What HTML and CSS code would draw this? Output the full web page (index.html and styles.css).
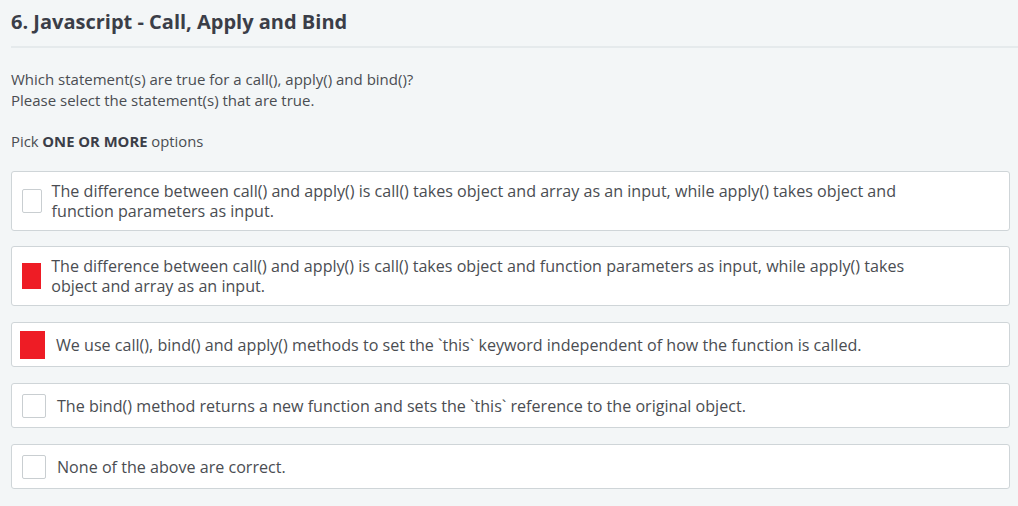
FILE: index.html
```html
<!DOCTYPE html>
<html lang="en">
<head>
<meta charset="utf-8">
<title>Quiz</title>
<link rel="stylesheet" href="styles.css">
</head>
<body>
<main class="quiz">
  <h1 class="title">6. Javascript - Call, Apply and Bind</h1>
  <div class="question">
    <p>Which statement(s) are true for a call(), apply() and bind()?<br>Please select the statement(s) that are true.</p>
  </div>
  <p class="pick">Pick <strong>ONE OR MORE</strong> options</p>
  <ul class="options">
    <li class="option">
      <span class="check"></span>
      <span class="label">The difference between call() and apply() is call() takes object and array as an input, while apply() takes object and function parameters as input.</span>
    </li>
    <li class="option">
      <span class="check checked"></span>
      <span class="label">The difference between call() and apply() is call() takes object and function parameters as input, while apply() takes object and array as an input.</span>
    </li>
    <li class="option single tight">
      <span class="check checked big"></span>
      <span class="label">We use call(), bind() and apply() methods to set the `this` keyword independent of how the function is called.</span>
    </li>
    <li class="option single">
      <span class="check"></span>
      <span class="label">The bind() method returns a new function and sets the `this` reference to the original object.</span>
    </li>
    <li class="option single">
      <span class="check"></span>
      <span class="label">None of the above are correct.</span>
    </li>
  </ul>
</main>
</body>
</html>
```

FILE: styles.css
```css
html, body {
  margin: 0;
  padding: 0;
}
body {
  background: #f3f6f7;
  font-family: "Open Sans", "Liberation Sans", sans-serif;
  color: #4a4d52;
}
.quiz {
  padding: 0 8px 0 11px;
}
.title {
  margin: 0 -8px 0 0;
  padding: 8px 0 10px;
  font-size: 20px;
  line-height: 28px;
  font-weight: 700;
  color: #3b3e48;
  border-bottom: 2px solid #e5eaec;
}
.question p {
  margin: 21px 0 0;
  font-size: 15px;
  line-height: 21px;
}
.pick {
  margin: 20px 0 0;
  font-size: 14.8px;
  line-height: 21px;
}
.pick strong {
  font-weight: 700;
  color: #3b3e48;
}
.options {
  list-style: none;
  margin: 19px 0 0;
  padding: 0;
  display: flex;
  flex-direction: column;
  gap: 15px;
}
.option {
  display: flex;
  align-items: center;
  gap: 10px;
  background: #fff;
  border: 1px solid #cfd5d8;
  border-radius: 3px;
  padding: 9px 100px 9px 10px;
}
.option.single {
  margin-top: 1px;
  padding-top: 10px;
  padding-bottom: 9px;
}
.option.tight {
  padding-top: 8px;
  padding-bottom: 7px;
}
.check {
  flex: 0 1 24px;
  width: 24px;
  height: 24px;
  box-sizing: border-box;
  border: 1px solid #c9ced1;
  border-radius: 2px;
  background: #fff;
}
.check.checked {
  border: none;
  border-radius: 0;
  background: #ee1c25;
  height: 26px;
}
.check.big {
  flex-basis: 25px;
  width: 25px;
  height: 28px;
  margin-left: -2px;
}
.label {
  font-size: 16.1px;
  line-height: 20px;
  color: #4a4d52;
}
.option.single .label {
  padding-left: 1px;
}
```
